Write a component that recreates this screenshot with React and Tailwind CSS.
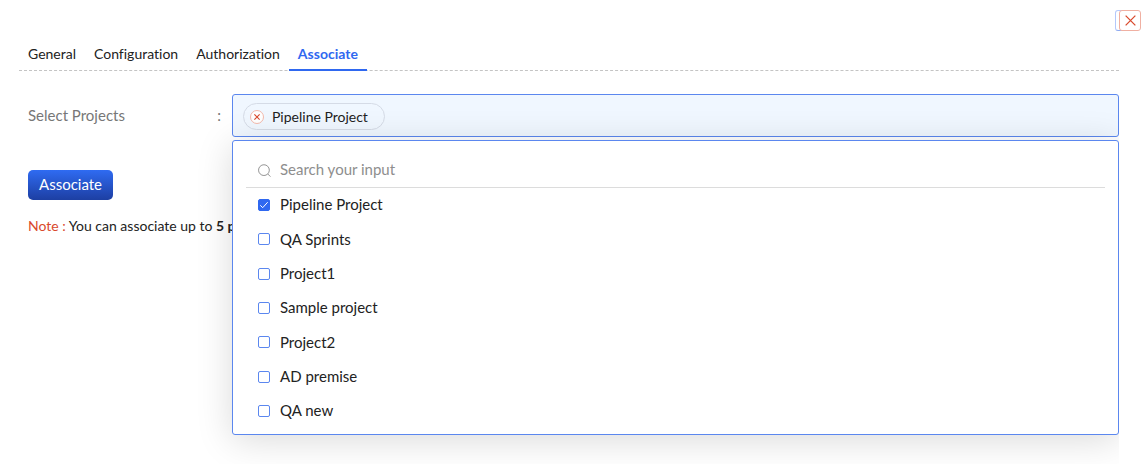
import React, { useState } from "react";

const TABS = ["General", "Configuration", "Authorization", "Associate"];

const PROJECTS = [
  "Pipeline Project",
  "QA Sprints",
  "Project1",
  "Sample project",
  "Project2",
  "AD premise",
  "QA new",
];

const CrossIcon = ({ className }) => (
  <svg viewBox="0 0 12 12" className={className} fill="none" stroke="currentColor" aria-hidden="true">
    <path d="M.7.7l10.6 10.6M11.3.7L.7 11.3" />
  </svg>
);

const SearchIcon = () => (
  <svg viewBox="0 0 14 14" className="h-[13px] w-[13px] text-[#8c8c8c]" fill="none" stroke="currentColor" aria-hidden="true">
    <circle cx="6.4" cy="6.6" r="5.8" />
    <path d="M10.6 10.8l2.8 2.8" />
  </svg>
);

const App = () => {
  const [activeTab, setActiveTab] = useState("Associate");
  const [selected, setSelected] = useState(["Pipeline Project"]);
  const [search, setSearch] = useState("");

  const toggleProject = (name) => {
    setSelected((prev) =>
      prev.includes(name) ? prev.filter((item) => item !== name) : [...prev, name]
    );
  };

  const visibleProjects = PROJECTS.filter((name) =>
    name.toLowerCase().includes(search.toLowerCase())
  );

  return (
    <div className="min-h-screen bg-white font-['Lato',sans-serif] text-sm text-[#222] [font-variant-ligatures:none]">
      <div className="flex justify-end pt-2.5 pr-3">
        <div className="rounded-[3px] border border-[#b4c8fb] border-b-[#8fabf0] pl-[3px]">
          <button
            type="button"
            aria-label="Close"
            className="-my-px -mr-[6px] flex h-[21px] w-[22px] items-center justify-center rounded-[3px] border border-[#f0b0a2] bg-white text-[#d9492c]"
          >
            <CrossIcon className="h-[11px] w-[11px] stroke-[1.4]" />
          </button>
        </div>
      </div>

      <div className="mr-[29px] ml-[19px]">
        <nav className="flex h-10 border-b border-dashed border-[#c4c4c4]">
          {TABS.map((tab) => (
            <button
              key={tab}
              type="button"
              onClick={() => setActiveTab(tab)}
              className={
                tab === activeTab
                  ? "-mb-px border-b-2 border-[#2f68f0] px-[9px] pt-2 font-bold text-[#2f68f0]"
                  : "-mb-px border-b-2 border-transparent px-[9px] pt-2"
              }
            >
              {tab}
            </button>
          ))}
        </nav>

        <div className="mt-[23px] flex pl-[9px]">
          <div className="flex w-[204px] shrink-0 justify-between pt-2.5 pr-[11px] text-[15px] leading-[22px] text-[#777]">
            <span id="projects-label">Select Projects</span>
            <span>:</span>
          </div>
          <div className="relative min-w-0 flex-1" role="group" aria-labelledby="projects-label">
            <div className="flex h-[43px] items-center gap-2 rounded-[3px] border border-[#5b87ef] bg-[#f0f7ff] px-2.5 pt-0.5">
              {selected.map((name) => (
                <span
                  key={name}
                  className="flex h-[27px] items-center gap-2 rounded-full border border-[#d5dbe6] pr-4 pl-1.5"
                >
                  <button
                    type="button"
                    aria-label={`Remove ${name}`}
                    onClick={() => toggleProject(name)}
                    className="flex h-3.5 w-3.5 items-center justify-center rounded-full border border-[#f3b9ac] bg-white text-[#d9492c]"
                  >
                    <CrossIcon className="h-1.5 w-1.5 stroke-[2.2]" />
                  </button>
                  {name}
                </span>
              ))}
            </div>

            <div className="absolute inset-x-0 top-full mt-[3px] rounded-[3px] border border-[#5b87ef] bg-white px-[13px] pb-1.5 shadow-[0_5px_36px_rgba(0,0,0,0.15)] [clip-path:inset(-60px_0_-60px_-60px)]">
              <div className="flex h-[47px] items-center gap-[9px] border-b border-[#dcdcdc] pt-3 pl-3">
                <SearchIcon />
                <input
                  type="text"
                  aria-label="Search projects"
                  placeholder="Search your input"
                  value={search}
                  onChange={(e) => setSearch(e.target.value)}
                  className="min-w-0 flex-1 text-[15px] outline-none placeholder:text-[#8e8e8e]"
                />
              </div>
              <ul className="flex h-60 flex-col text-[15px]">
                {visibleProjects.map((name) => (
                  <li key={name} className="flex max-h-9 flex-1 items-center">
                    <label className="flex items-center gap-2.5 pl-3">
                      <span className="relative flex h-3 w-3">
                        <input
                          type="checkbox"
                          checked={selected.includes(name)}
                          onChange={() => toggleProject(name)}
                          className="peer h-3 w-3 appearance-none rounded-[2px] border border-[#5b87ef] bg-white checked:border-[#2f68f0] checked:bg-[#2f68f0]"
                        />
                        <svg
                          viewBox="0 0 12 12"
                          className="pointer-events-none absolute inset-0 hidden text-white peer-checked:block"
                          fill="none"
                          stroke="currentColor"
                          aria-hidden="true"
                        >
                          <path d="M2.3 6.3l2.4 2.4 5-5.5" />
                        </svg>
                      </span>
                      {name}
                    </label>
                  </li>
                ))}
              </ul>
            </div>
          </div>
        </div>

        <div className="mt-[33px] pl-[9px]">
          <button
            type="button"
            className="h-[30px] rounded-[5px] bg-linear-to-b from-[#2f6bf2] to-[#1d3fa3] px-[11px] text-[15px] text-white"
          >
            Associate
          </button>
          <p className="mt-[15px] leading-[22px]">
            <span className="text-[#d9492c]">Note :</span> You can associate up to <b>5 projects</b>
          </p>
        </div>
      </div>
    </div>
  );
};

export default App;
